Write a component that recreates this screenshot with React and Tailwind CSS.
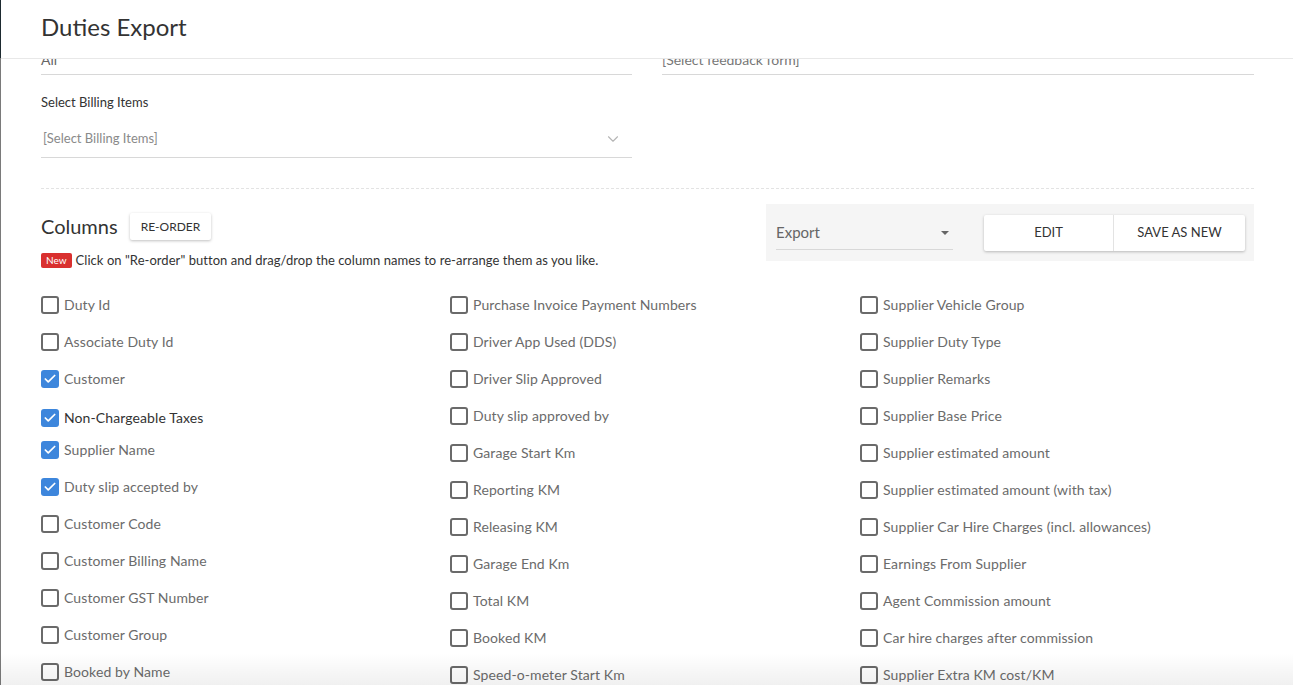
import React from "react";
import { Check, ChevronDown } from "lucide-react";

const col1 = [
  ["Duty Id", false],
  ["Associate Duty Id", false],
  ["Customer", true],
  ["Non-Chargeable Taxes", true, "special"],
  ["Supplier Name", true],
  ["Duty slip accepted by", true],
  ["Customer Code", false],
  ["Customer Billing Name", false],
  ["Customer GST Number", false],
  ["Customer Group", false],
  ["Booked by Name", false],
];
const col2 = [
  ["Purchase Invoice Payment Numbers", false],
  ["Driver App Used (DDS)", false],
  ["Driver Slip Approved", false],
  ["Duty slip approved by", false],
  ["Garage Start Km", false],
  ["Reporting KM", false],
  ["Releasing KM", false],
  ["Garage End Km", false],
  ["Total KM", false],
  ["Booked KM", false],
  ["Speed-o-meter Start Km", false],
];
const col3 = [
  ["Supplier Vehicle Group", false],
  ["Supplier Duty Type", false],
  ["Supplier Remarks", false],
  ["Supplier Base Price", false],
  ["Supplier estimated amount", false],
  ["Supplier estimated amount (with tax)", false],
  ["Supplier Car Hire Charges (incl. allowances)", false],
  ["Earnings From Supplier", false],
  ["Agent Commission amount", false],
  ["Car hire charges after commission", false],
  ["Supplier Extra KM cost/KM", false],
];

function Item({ label, checked, special }) {
  return (
    <div
      className={
        special
          ? "flex items-center h-[34px] pt-[7px]"
          : "flex items-center h-[37px]"
      }
    >
      {checked ? (
        <span className="w-[18px] h-[18px] rounded-[3px] bg-[#3d86dc] flex items-center justify-center shrink-0">
          <Check size={14} color="#ffffff" strokeWidth={3} />
        </span>
      ) : (
        <span className="w-[18px] h-[18px] rounded-[3px] border-2 border-[#6a6a6a] shrink-0" />
      )}
      <span
        className={
          "ml-[5px] text-[14px] leading-[20px] tracking-[0.1px] " +
          (special ? "text-[#333333]" : "text-[#6b6b6b]")
        }
      >
        {label}
      </span>
    </div>
  );
}

export default function App() {
  return (
    <div
      className="relative w-[1293px] h-[685px] overflow-hidden bg-white flex"
      style={{ fontFamily: "Lato, 'Open Sans', Arial, sans-serif" }}
    >
      <div className="w-[1px] flex flex-col shrink-0">
        <div className="h-[58px] bg-[#1d2a30]" />
        <div className="flex-1 bg-[#7a7a7a]" />
      </div>
      <div className="flex-1 flex flex-col">
        <div className="relative z-10 h-[59px] shrink-0 bg-white border-b border-[#e8e8e8] flex items-center pl-[40px]">
          <h1 className="text-[24px] leading-[30px] text-[#333333] -mt-[5px]">Duties Export</h1>
        </div>
        <div className="flex-1 overflow-hidden">
          <div className="-mt-[15px] pl-[40px] pr-[39px]">
            <div className="flex gap-[30px]">
              <div className="w-[591px] h-[31px] border-b border-[#d8d8d8] flex items-center text-[14px] text-[#666666]">
                All
              </div>
              <div className="flex-1 h-[31px] border-b border-[#d8d8d8] flex items-center justify-between text-[14px] text-[#777777]">
                <span>[Select feedback form]</span>
              </div>
            </div>
            <div className="mt-[18px] text-[13px] leading-[18px] text-[#333333]">Select Billing Items</div>
            <div className="mt-[14px] w-[591px] h-[33px] border-b border-[#d8d8d8] flex items-center justify-between pl-[2px] pr-[10px] pb-[4px]">
              <span className="text-[13px] text-[#8a8a8a]">[Select Billing Items]</span>
              <ChevronDown size={18} color="#b5b5b5" strokeWidth={1.5} />
            </div>
            <div className="mt-[30px] border-t border-dashed border-[#e3e3e3]" />
            <div className="mt-[15px] flex justify-between items-start">
              <div className="pt-[9px]">
                <div className="flex items-center h-[27px]">
                  <span className="text-[20px] leading-[27px] text-[#333333]">Columns</span>
                  <button className="ml-[12px] h-[27px] px-[11px] bg-white rounded-[2px] text-[12px] text-[#333333] shadow-[0_1px_3px_rgba(0,0,0,0.25)]">
                    RE-ORDER
                  </button>
                </div>
                <div className="mt-[13px] flex items-center h-[15px]">
                  <span className="h-[15px] px-[5px] rounded-[2px] bg-[#d9302f] text-white text-[10px] leading-[15px]">New</span>
                  <span className="ml-[4px] text-[13px] text-[#333333] tracking-[0.05px]">
                    Click on "Re-order" button and drag/drop the column names to re-arrange them as you like.
                  </span>
                </div>
              </div>
              <div className="w-[488px] h-[57px] bg-[#f5f5f5] flex items-center pl-[10px]">
                <div className="w-[177px] h-[34px] border-b border-[#d8d8d8] flex items-center justify-between pr-[4px] mt-[1px]">
                  <span className="text-[15px] text-[#666666]">Export</span>
                  <span className="w-0 h-0 border-l-[4px] border-r-[4px] border-t-[4px] border-l-transparent border-r-transparent border-t-[#666666]" />
                </div>
                <div className="ml-[31px] flex h-[36px] bg-white rounded-[2px] shadow-[0_1px_3px_rgba(0,0,0,0.25)]">
                  <button className="w-[130px] h-full text-[13px] text-[#333333] border-r border-[#e3e3e3]">EDIT</button>
                  <button className="w-[131px] h-full text-[13px] text-[#333333]">SAVE AS NEW</button>
                </div>
              </div>
            </div>
            <div className="mt-[18px] grid grid-cols-[409px_410px_1fr]">
              <div className="flex flex-col">
                {col1.map(([l, c, s]) => (
                  <Item key={l} label={l} checked={c} special={!!s} />
                ))}
              </div>
              <div className="flex flex-col">
                {col2.map(([l, c]) => (
                  <Item key={l} label={l} checked={c} />
                ))}
              </div>
              <div className="flex flex-col">
                {col3.map(([l, c]) => (
                  <Item key={l} label={l} checked={c} />
                ))}
              </div>
            </div>
          </div>
        </div>
      </div>
      <div className="pointer-events-none absolute left-0 right-0 bottom-0 h-[32px] bg-gradient-to-b from-transparent to-[rgba(0,0,0,0.06)]" />
    </div>
  );
}
